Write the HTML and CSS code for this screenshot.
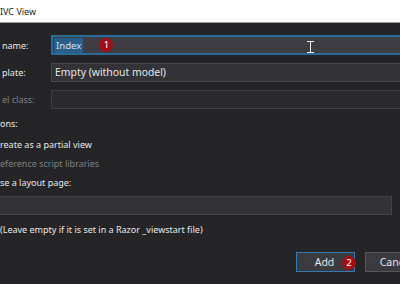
FILE: index.html
```html
<!DOCTYPE html>
<html lang="en">
<head>
    <meta charset="UTF-8">
    <title>Add MVC View</title>
    <link rel="stylesheet" href="styles.css">
</head>
<body>

<div class="titlebar">IVC View</div>

<div class="dialog">
    <div class="fields">
        <label class="label">name:</label>
        <div class="textbox focused">
            <span class="selected">Index</span>
            <span class="badge badge-one">1</span>
            <span class="ibeam"></span>
        </div>

        <label class="label">plate:</label>
        <div class="combo">Empty (without model)</div>

        <label class="label dim">el class:</label>
        <div class="textbox disabled"></div>
    </div>

    <div class="options">
        <div class="heading">ons:</div>
        <div class="check">reate as a partial view</div>
        <div class="check dim">eference script libraries</div>
        <div class="check">se a layout page:</div>
        <div class="textbox layout"></div>
        <div class="note">(Leave empty if it is set in a Razor _viewstart file)</div>
    </div>

    <div class="buttons">
        <button class="btn default">Add<span class="badge badge-two">2</span></button>
        <button class="btn">Cancel</button>
    </div>
</div>

<div class="edge"></div>

</body>
</html>
```

FILE: styles.css
```css
body {
    margin: 0;
    width: 400px;
    height: 284px;
    overflow: hidden;
    background-color: #252527;
    font-family: "Noto Sans", "Open Sans", sans-serif;
    font-size: 9px;
    color: #e6e6e6;
}
.titlebar {
    height: 22px;
    line-height: 24px;
    background-color: #ffffff;
    border-bottom: 1px solid #9a9a9a;
    color: #1e1e1e;
    font-size: 9px;
}
.dialog {
    height: 256px;
    padding-top: 12px;
}
.fields {
    display: grid;
    grid-template-columns: 51px 1fr;
    grid-template-rows: 20px 19px 19px;
    row-gap: 8px;
    align-items: center;
}
.label {
    padding-left: 2px;
}
.dim {
    color: #7d7d80;
}
.textbox {
    position: relative;
    box-sizing: border-box;
    height: 19px;
    background-color: #333337;
    border: 1px solid #434347;
}
.focused {
    height: 20px;
    background-color: #3d3d43;
    border: 2px solid #2c6a98;
    border-right: none;
    display: flex;
    align-items: center;
}
.disabled {
    background-color: #2b2b2e;
    border-color: #3f3f44;
    border-right: none;
}
.selected {
    margin-left: 1px;
    padding: 0 2px;
    line-height: 15px;
    font-size: 9.6px;
    background-color: #2a5f8c;
    color: #cfe3f5;
}
.combo {
    box-sizing: border-box;
    height: 19px;
    line-height: 17px;
    padding-left: 3px;
    background-color: #333337;
    border: 1px solid #48484d;
    border-right: none;
    font-size: 10.4px;
}
.badge {
    display: inline-block;
    width: 14px;
    height: 14px;
    line-height: 14px;
    border-radius: 50%;
    background-color: #a30e16;
    color: #ffffff;
    font-size: 9.5px;
    text-align: center;
}
.badge-one {
    margin-left: 16px;
}
.ibeam {
    position: absolute;
    left: 257px;
    top: 4px;
    width: 1px;
    height: 12px;
    background-color: #f0f0f0;
}
.ibeam::before, .ibeam::after {
    content: "";
    position: absolute;
    left: -3px;
    width: 7px;
    height: 1px;
    background-color: #f0f0f0;
}
.ibeam::before {
    top: 0;
}
.ibeam::after {
    bottom: 0;
}
.options {
    padding-top: 6px;
}
.heading {
    height: 18px;
    line-height: 18px;
    margin-bottom: 3px;
}
.check {
    height: 18px;
    line-height: 18px;
    margin-top: 1px;
}
.layout {
    width: 392px;
    height: 19px;
    margin-top: 4px;
    border-left: none;
}
.note {
    margin-top: 5px;
    line-height: 20px;
}
.buttons {
    display: flex;
    gap: 10px;
    padding-left: 296px;
    margin-top: 12px;
}
.btn {
    box-sizing: border-box;
    flex-shrink: 0;
    width: 59px;
    height: 20px;
    padding: 0;
    font-family: inherit;
    font-size: 10.5px;
    color: #e6e6e6;
    background-color: #3a3a3f;
    border: 1px solid #56565b;
    position: relative;
}
.btn.default {
    border: 1px solid #3478b4;
    padding-right: 2px;
}
.btn + .btn {
    padding-left: 3px;
}
.badge-two {
    position: absolute;
    left: 45px;
    top: 3px;
}
.edge {
    height: 2px;
    background-color: #284f6c;
}
```
